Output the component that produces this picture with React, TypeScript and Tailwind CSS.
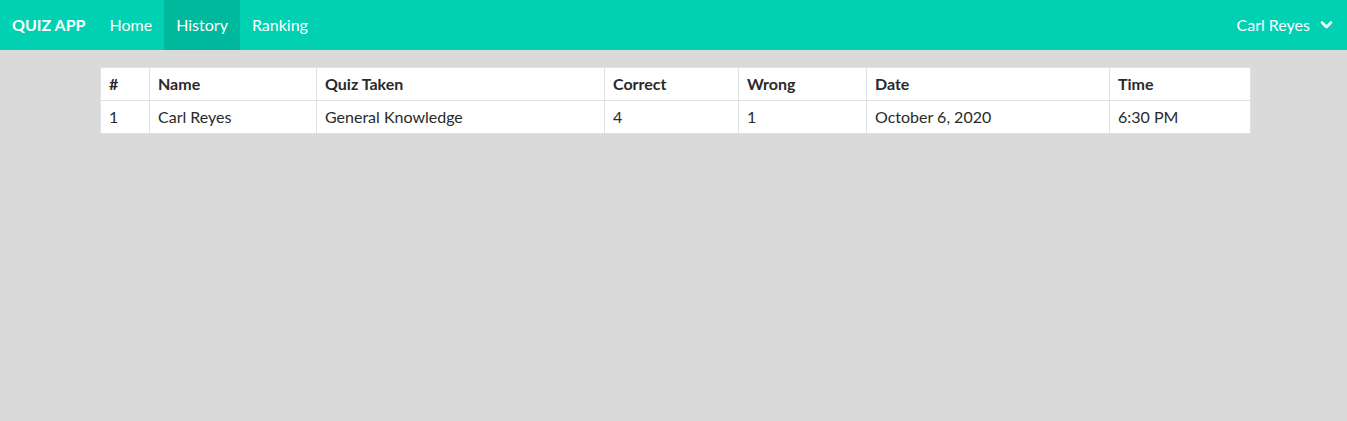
const rows = [
  {
    id: 1,
    name: 'Carl Reyes',
    quiz: 'General Knowledge',
    correct: 4,
    wrong: 1,
    date: 'October 6, 2020',
    time: '6:30 PM',
  },
]

const headers = ['#', 'Name', 'Quiz Taken', 'Correct', 'Wrong', 'Date', 'Time']
const widths = ['w-[49px]', 'w-[167px]', 'w-[288px]', 'w-[134px]', 'w-[128px]', 'w-[243px]', 'w-[141px]']

const App = (): JSX.Element => {
  return (
    <div className="min-h-screen bg-[#dadada] font-['Lato','Noto_Sans',sans-serif] text-[16px]">
      {/* Navbar */}
      <nav className="flex h-[50px] items-stretch justify-between bg-[#00d1b2] text-white">
        <div className="flex items-stretch">
          <a className="flex items-center px-3 font-bold">QUIZ APP</a>
          <a className="flex items-center px-3">Home</a>
          <a className="flex items-center bg-[#00b89c] px-3">History</a>
          <a className="flex items-center px-3">Ranking</a>
        </div>
        <div className="flex items-center gap-[10px] pr-[14px]">
          <span>Carl Reyes</span>
          <svg className="h-[10px] w-[13px]" viewBox="0 0 13 10" fill="none" stroke="currentColor">
            <path d="M2 2.5l4.5 4.5 4.5-4.5" strokeWidth={2.6} strokeLinecap="round" strokeLinejoin="round" />
          </svg>
        </div>
      </nav>

      {/* History table */}
      <div className="pt-[17px] pl-[100px]">
        <table className="w-[1150px] table-fixed border-collapse bg-white text-[#2a2a2a]">
          <colgroup>
            {widths.map((w, i) => (
              <col key={i} className={w} />
            ))}
          </colgroup>
          <thead>
            <tr>
              {headers.map((h) => (
                <th key={h} className="border border-[#dee2e6] px-2 py-1 text-left font-bold leading-6">
                  {h}
                </th>
              ))}
            </tr>
          </thead>
          <tbody>
            {rows.map((r) => (
              <tr key={r.id}>
                <td className="border border-[#dee2e6] px-2 py-1 leading-6">{r.id}</td>
                <td className="border border-[#dee2e6] px-2 py-1 leading-6">{r.name}</td>
                <td className="border border-[#dee2e6] px-2 py-1 leading-6">{r.quiz}</td>
                <td className="border border-[#dee2e6] px-2 py-1 leading-6">{r.correct}</td>
                <td className="border border-[#dee2e6] px-2 py-1 leading-6">{r.wrong}</td>
                <td className="border border-[#dee2e6] px-2 py-1 leading-6">{r.date}</td>
                <td className="border border-[#dee2e6] px-2 py-1 leading-6">{r.time}</td>
              </tr>
            ))}
          </tbody>
        </table>
      </div>
    </div>
  )
}

export default App
